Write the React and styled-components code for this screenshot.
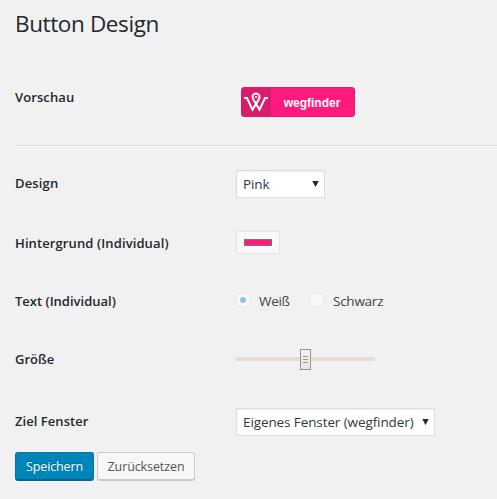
import React from "react";
import styled, { createGlobalStyle } from "styled-components";

const GlobalStyle = createGlobalStyle`
  * { box-sizing: border-box; }
  body {
    margin: 0;
    background: #f1f1f1;
    color: #32373c;
    font: 14px/20px "Open Sans", "Noto Sans", sans-serif;
  }
`;

const Page = styled.main`
  width: 497px;
  height: 499px;
  padding-left: 15px;
  overflow: hidden;
  background: #f1f1f1;
`;

const Title = styled.h1`
  height: 48px;
  margin: 0;
  font-size: 22.5px;
  font-weight: 400;
  line-height: 48px;
  letter-spacing: ${(p) => p.$spacing}px;
  color: #23282d;
  white-space: nowrap;
`;

const Row = styled.div`
  display: grid;
  grid-template-columns: 221px 1fr;
  align-items: center;
  height: ${(p) => p.$height}px;
  padding-top: ${(p) => p.$top || 0}px;
`;

const Label = styled.span`
  padding-bottom: ${(p) => p.$lift || 0}px;
  font-size: 13px;
  font-weight: 600;
  color: #23282d;
  letter-spacing: ${(p) => p.$spacing || 0}px;
  white-space: nowrap;
`;

const Divider = styled.hr`
  height: 2px;
  margin: 0;
  border: 0;
  border-top: 1px solid #ddd;
  border-bottom: 1px solid #fafafa;
`;

const BrandButton = styled.button`
  display: flex;
  width: 114px;
  height: 30px;
  margin: 10px 0 0 5px;
  padding: 0;
  overflow: hidden;
  border: 1px solid #d81b6a;
  border-radius: 3px;
  background: #ff1b7e;
  color: #fff;
  font: bold 12px/30px "Liberation Sans", Arial, sans-serif;
`;

const BrandMark = styled.span`
  flex: 0 0 29px;
  height: 28px;
  background: #d81b6a;
  svg { display: block; }
`;

const BrandName = styled.span`
  flex: 1;
  padding-right: 1px;
  text-align: center;
`;

const SelectBox = styled.div`
  display: flex;
  align-items: center;
  justify-content: space-between;
  width: ${(p) => p.$width}px;
  height: 28px;
  padding: 0 5px 0 6px;
  border: 1px solid #ddd;
  background: #fff;
  box-shadow: inset 0 1px 2px rgba(0, 0, 0, 0.07);
  font-size: 13.5px;
  letter-spacing: ${(p) => p.$spacing || 0}px;
  white-space: nowrap;
  svg { flex: none; }
`;

const ColorField = styled.div`
  display: flex;
  align-items: center;
  justify-content: center;
  width: 44px;
  height: 23px;
  border: 1px solid #e4e4e4;
  background: #f8f8f8;
`;

const Swatch = styled.span`
  width: 28px;
  height: 7px;
  border: 1px solid #777;
  background: #ff1b7e;
`;

const Options = styled.div`
  display: flex;
`;

const Option = styled.label`
  display: flex;
  align-items: center;
  width: 74px;
  font-size: 13.5px;
  color: #444;
  letter-spacing: ${(p) => p.$spacing || 0}px;
`;

const Radio = styled.span`
  display: flex;
  align-items: center;
  justify-content: center;
  flex: none;
  width: 16px;
  height: 16px;
  margin: 0 8px 2px -1px;
  border: 1px solid #e7e7e7;
  border-radius: 50%;
  background: #f7f7f7;
  &::after {
    content: "";
    width: 6px;
    height: 6px;
    border-radius: 50%;
    background: ${(p) => (p.$checked ? "#8ec4df" : "transparent")};
  }
`;

const Track = styled.div`
  display: flex;
  align-items: center;
  justify-content: center;
  width: 139px;
  height: 4px;
  margin-bottom: 1px;
  background: #e2ddd6;
`;

const Thumb = styled.span`
  display: flex;
  flex: none;
  flex-direction: column;
  align-items: center;
  justify-content: center;
  gap: 2px;
  width: 11px;
  height: 21px;
  border: 1px solid #9c948c;
  background: linear-gradient(#f5f2ef, #e8e3df);
`;

const Grip = styled.i`
  width: 5px;
  height: 1px;
  background: #9c948c;
`;

const Actions = styled.div`
  display: flex;
  gap: 3px;
`;

const ActionButton = styled.button`
  width: ${(p) => p.$width}px;
  height: 29px;
  padding: 0;
  border: 1px solid ${(p) => (p.$primary ? "#0073aa" : "#ccc")};
  border-bottom-width: 2px;
  border-bottom-color: ${(p) => (p.$primary ? "#006799" : "#ccc")};
  border-radius: 3px;
  background: ${(p) => (p.$primary ? "#0085ba" : "#f7f7f7")};
  color: ${(p) => (p.$primary ? "#fff" : "#555")};
  font: 12.5px/27px "Open Sans", "Noto Sans", sans-serif;
  letter-spacing: ${(p) => p.$spacing || 0}px;
  text-shadow: ${(p) => (p.$primary ? "0 -1px 1px #006799" : "none")};
`;

const Select = ({ width, spacing, children }) => (
  <SelectBox $width={width} $spacing={spacing} role="combobox">
    {children}
    <svg width="7" height="6" viewBox="0 0 7 6">
      <path d="M0.3 0H6.7L3.5 6Z" fill="#23282d" />
    </svg>
  </SelectBox>
);

const Logo = () => (
  <svg width="29" height="28" viewBox="0 0 29 28" fill="none" stroke="#fff" strokeWidth="2">
    <path d="M2 10H5L10.5 21.6L16.7 11.6C18.5 8.6 17.2 5.4 14 5.4S9.5 8.6 11.3 11.6L17.5 21.6L23 10H26" />
    <circle cx="14" cy="9" r="0.8" strokeWidth="1" />
  </svg>
);

export default function App() {
  return (
    <Page>
      <GlobalStyle />
      <Title $spacing={-0.38}>Button Design</Title>
      <Row $height={97}>
        <Label $spacing={0.1}>Vorschau</Label>
        <BrandButton>
          <BrandMark><Logo /></BrandMark>
          <BrandName>wegfinder</BrandName>
        </BrandButton>
      </Row>
      <Divider />
      <Row $height={74}>
        <Label $lift={2} $spacing={0.15}>Design</Label>
        <Select width={89} spacing={-0.1}>Pink</Select>
      </Row>
      <Row $height={43}>
        <Label $spacing={0.11}>Hintergrund (Individual)</Label>
        <ColorField><Swatch /></ColorField>
      </Row>
      <Row $height={74}>
        <Label>Text (Individual)</Label>
        <Options>
          <Option $spacing={-0.3}><Radio $checked />Weiß</Option>
          <Option $spacing={-0.25}><Radio />Schwarz</Option>
        </Options>
      </Row>
      <Row $height={43}>
        <Label $lift={2}>Größe</Label>
        <Track><Thumb><Grip /><Grip /><Grip /></Thumb></Track>
      </Row>
      <Row $height={71} $top={11}>
        <Label $lift={2} $spacing={0.05}>Ziel Fenster</Label>
        <Select width={199} spacing={-0.1}>Eigenes Fenster (wegfinder)</Select>
      </Row>
      <Actions>
        <ActionButton $primary $width={79} $spacing={-0.12}>Speichern</ActionButton>
        <ActionButton $width={98} $spacing={-0.1}>Zurücksetzen</ActionButton>
      </Actions>
    </Page>
  );
}
